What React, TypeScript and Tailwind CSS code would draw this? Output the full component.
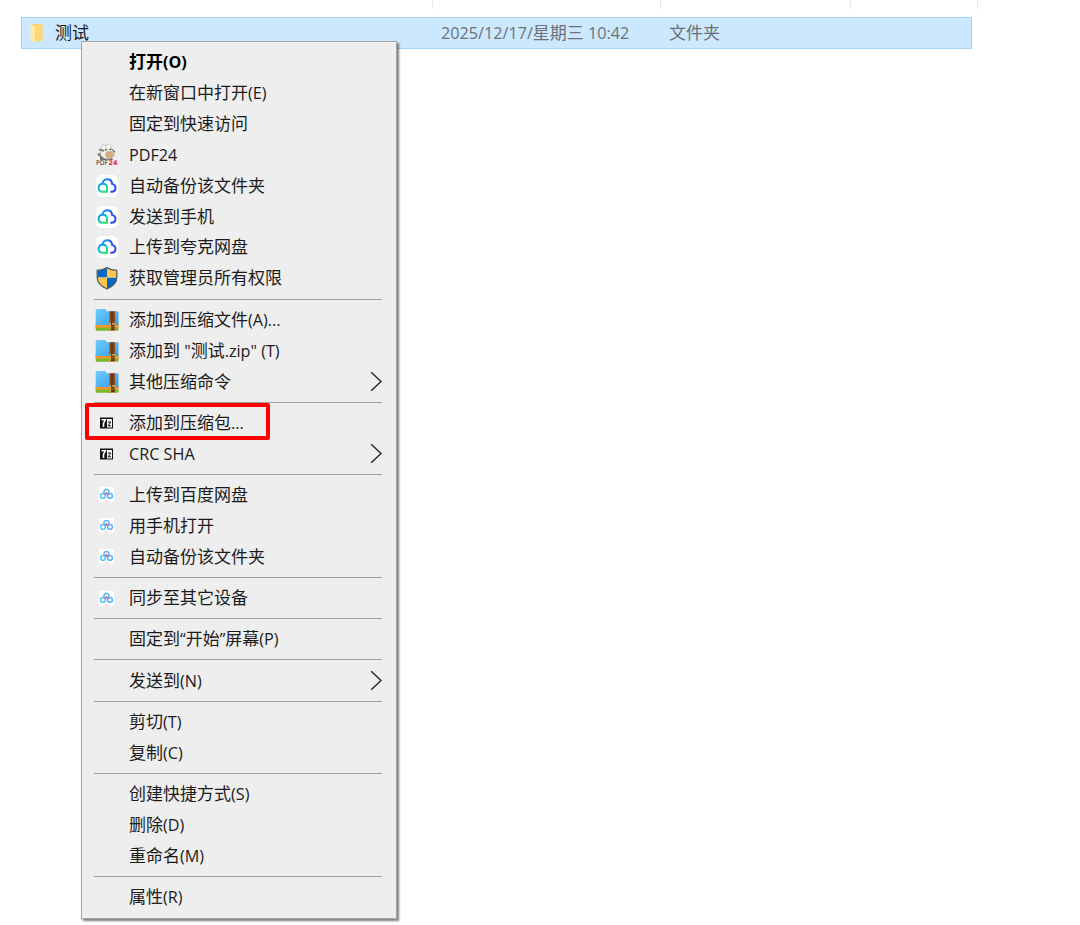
import type { ReactNode } from "react";

type Item = { label: string; icon?: ReactNode; bold?: boolean; sub?: boolean; marked?: boolean };

/* Latin runs are set slightly smaller than the Chinese characters beside them. */
function Mixed({ text }: { text: string }) {
  const runs = text.match(/[\u2e80-\uffff]+|[^\u2e80-\uffff]+/g) ?? [];
  return (
    <>
      {runs.map((run, i) =>
        /[\u2e80-\uffff]/.test(run) ? (
          <span key={i}>{run}</span>
        ) : (
          <span key={i} className="text-[16.2px] leading-none">
            {run}
          </span>
        ),
      )}
    </>
  );
}

function Folder() {
  return (
    <svg width="14" height="20" viewBox="0 0 14 20">
      <path d="M1 1h11.5v16.5H4L1 18z" fill="#f6d27a" />
      <path d="M0.5 1.5 5 2.8V19L0.5 17.5z" fill="#ffe8a4" />
      <path d="M5 3h7.5v14.5L5 19z" fill="#fbd978" />
    </svg>
  );
}

function Sheep() {
  return (
    <svg width="22" height="24" viewBox="0 0 22 24">
      <path d="M4 17v-3L1 11l3-1 1 3h10l2 4z" fill="#77736c" />
      <ellipse cx="11.5" cy="10" rx="7" ry="6" fill="#f4f2ed" stroke="#aaa69f" strokeWidth=".8" />
      <circle cx="8" cy="4.5" r="2.7" fill="#f8f7f3" stroke="#aaa" strokeWidth=".6" />
      <circle cx="12.5" cy="3.7" r="2.7" fill="#f8f7f3" stroke="#aaa" strokeWidth=".6" />
      <path d="M3 6.5 8 8M16 7l3 2" stroke="#77736c" strokeWidth="1.4" />
      <ellipse cx="13.5" cy="11.8" rx="4.3" ry="3.8" fill="#d2ad82" />
      <circle cx="10" cy="7" r=".8" fill="#222" />
      <circle cx="14.5" cy="6.5" r=".8" fill="#222" />
      <text x="0" y="22" fontSize="6.5" fontFamily="DejaVu Sans" fill="#333" textLength="12" lengthAdjust="spacingAndGlyphs">PDF</text>
      <text x="12.5" y="22" fontSize="6.5" fontWeight="bold" fontFamily="DejaVu Sans" fill="#e5242b" textLength="9" lengthAdjust="spacingAndGlyphs">24</text>
    </svg>
  );
}

function QuarkCloud() {
  return (
    <svg width="22" height="22" viewBox="0 0 22 22" fill="none">
      <defs>
        <linearGradient id="cloudBlue" x1="0" y1="0" x2="1" y2="1">
          <stop offset="0" stopColor="#17a8f5" />
          <stop offset=".4" stopColor="#2456f5" />
          <stop offset="1" stopColor="#3040f0" />
        </linearGradient>
        <linearGradient id="cloudGreen" x1="0" y1="0" x2=".7" y2="1">
          <stop offset="0" stopColor="#1779f5" />
          <stop offset=".5" stopColor="#10c4d8" />
          <stop offset="1" stopColor="#24e06c" />
        </linearGradient>
      </defs>
      <rect width="22" height="22" rx="5.5" fill="#fff" />
      <path d="M6.5 8C7.2 5.5 9 4.2 11.2 4.2c2.9 0 4.8 2 4.9 4.7 2.1.6 3.4 2 3.4 3.9 0 2.4-1.7 4-4 4h-1.2" stroke="url(#cloudBlue)" strokeWidth="2" />
      <path d="M11 16.8H6.7c-2.4 0-4.1-1.6-4.1-4s1.8-4 4.1-4c2.5 0 4.3 1.7 4.3 4.2z" stroke="url(#cloudGreen)" strokeWidth="2" />
    </svg>
  );
}

function Shield() {
  return (
    <svg width="22" height="24" viewBox="0 0 22 24">
      <defs>
        <clipPath id="shieldClip">
          <path d="M11 1.5C8 3.7 4.6 4.3 1.2 4.3v7C1.2 16.6 5.5 20.7 11 23c5.5-2.3 9.8-6.4 9.8-11.7v-7C17.4 4.3 14 3.7 11 1.5z" />
        </clipPath>
      </defs>
      <g clipPath="url(#shieldClip)">
        <path d="M0 0h11v11.5H0zM11 11.5h11V24H11z" fill="#0869c5" />
        <path d="M11 0h11v11.5H11zM0 11.5h11V24H0z" fill="#ffc64a" />
      </g>
      <path d="M11 1.5C8 3.7 4.6 4.3 1.2 4.3v7C1.2 16.6 5.5 20.7 11 23c5.5-2.3 9.8-6.4 9.8-11.7v-7C17.4 4.3 14 3.7 11 1.5z" fill="none" stroke="#555d61" strokeWidth="1.3" />
    </svg>
  );
}

function Archive() {
  return (
    <svg width="24" height="24" viewBox="0 0 24 24">
      <defs>
        <linearGradient id="folderBlue" x1="0" y1="0" x2="1" y2="1">
          <stop offset="0" stopColor="#72cbfc" />
          <stop offset="1" stopColor="#339fe9" />
        </linearGradient>
      </defs>
      <path d="M.7 16h22.8v5.5q0 1.2-1.2 1.2H2Q.7 22.700.7 21.500z" fill="#76b82a" />
      <path d="M.7 15h22.800v4.600H.7z" fill="#f7962b" />
      <path d="M.7 2.200Q.7 1 2 1h7.500q1 0 1.500 1l.8 1.300h10.500q1.200 0 1.200 1.200v12.500H.7z" fill="url(#folderBlue)" />
      <path d="M14.500 3.200h5.500V23h-5.500z" fill="#8d491e" />
      <path d="M16 5h2.500M16 7h2.500M16 9h2.500M16 11h2.500M16 13h2.500" stroke="#4f2a17" strokeWidth="1" />
      <path d="M14.200 15h6v7.800h-6z" fill="#d99a38" />
      <path d="M16.700 14.500v3h3M16 19h3v2.500h-3M16 20.200h3" fill="none" stroke="#4c2d15" strokeWidth="1.100" />
    </svg>
  );
}

function SevenZip() {
  return (
    <svg width="13" height="12" viewBox="0 0 13 12">
      <path d="M0 .5h13v11H0z" fill="#111" />
      <path d="M7 2h5v8.500H7z" fill="#f4f4f4" />
      <path d="M1.500 2.800h3.800L3.500 6.500V10" fill="none" stroke="#fff" strokeWidth="1.600" />
      <path d="M8 5h2.700L8.200 8.800H11" fill="none" stroke="#111" strokeWidth="1" />
    </svg>
  );
}

function Netdisk() {
  return (
    <svg width="15" height="15" viewBox="0 0 15 15" fill="none">
      <rect width="15" height="15" rx="2" fill="#fff" />
      <circle cx="7.500" cy="5" r="2.600" stroke="#64b5f3" strokeWidth="1.500" />
      <circle cx="4" cy="8.900" r="2.400" stroke="#56c3f7" strokeWidth="1.500" />
      <circle cx="11" cy="8.900" r="2.400" stroke="#5cb2f5" strokeWidth="1.500" />
      <path d="M5.700 7.200 7.500 5.700l1.900 1.800" stroke="#e4607f" strokeWidth="1.400" />
      <path d="M5.500 14h4" stroke="#f5b8c4" strokeWidth=".8" />
    </svg>
  );
}

function Arrow() {
  return (
    <svg width="13" height="21" viewBox="0 0 13 21" fill="none">
      <path d="M1.200 1.200 11 10.500 1.200 19.800" stroke="#222" strokeWidth="1.350" />
    </svg>
  );
}

const groups: Item[][] = [
  [
    { label: "打开(O)", bold: true },
    { label: "在新窗口中打开(E)" },
    { label: "固定到快速访问" },
    { label: "PDF24", icon: <Sheep /> },
    { label: "自动备份该文件夹", icon: <QuarkCloud /> },
    { label: "发送到手机", icon: <QuarkCloud /> },
    { label: "上传到夸克网盘", icon: <QuarkCloud /> },
    { label: "获取管理员所有权限", icon: <Shield /> },
  ],
  [
    { label: "添加到压缩文件(A)...", icon: <Archive /> },
    { label: '添加到 "测试.zip" (T)', icon: <Archive /> },
    { label: "其他压缩命令", icon: <Archive />, sub: true },
  ],
  [
    { label: "添加到压缩包...", icon: <SevenZip />, marked: true },
    { label: "CRC SHA", icon: <SevenZip />, sub: true },
  ],
  [
    { label: "上传到百度网盘", icon: <Netdisk /> },
    { label: "用手机打开", icon: <Netdisk /> },
    { label: "自动备份该文件夹", icon: <Netdisk /> },
  ],
  [{ label: "同步至其它设备", icon: <Netdisk /> }],
  [{ label: "固定到“开始”屏幕(P)" }],
  [{ label: "发送到(N)", sub: true }],
  [{ label: "剪切(T)" }, { label: "复制(C)" }],
  [{ label: "创建快捷方式(S)" }, { label: "删除(D)" }, { label: "重命名(M)" }],
  [{ label: "属性(R)" }],
];

function Row({ item }: { item: Item }) {
  return (
    <div className="relative flex h-[30.93px] items-center pr-[13px]">
      <div className="flex w-[47px] shrink-0 justify-center pl-[2px]">{item.icon}</div>
      <div className={item.bold ? "grow font-bold text-black" : "grow"}>
        <Mixed text={item.label} />
      </div>
      {item.sub && <Arrow />}
      {item.marked && (
        <div className="absolute -top-[4px] left-[3px] h-[37px] w-[185px] rounded-[2px] border-[4.5px] border-[#fe0000]" />
      )}
    </div>
  );
}

export default function App() {
  return (
    <div className="relative h-[925px] w-[1080px] overflow-hidden bg-white font-['Open_Sans','Noto_Sans_CJK_SC',sans-serif] text-[17px] leading-[24px] whitespace-pre text-[#1b1b1b]">
      <div className="flex h-[17px] pl-[432px]">
        <div className="h-[9px] w-[228px] border-l border-[#e8e8e8]" />
        <div className="h-[9px] w-[190px] border-l border-[#e8e8e8]" />
        <div className="h-[9px] w-[127px] border-l border-[#e8e8e8]" />
        <div className="h-[9px] border-l border-[#e8e8e8]" />
      </div>
      <div className="ml-[21px] flex h-[32px] w-[951px] items-center border border-[#a6d3f6] bg-[#cce8ff]">
        <div className="flex w-[33px] pl-[8px]">
          <Folder />
        </div>
        <div className="w-[386px]">测试</div>
        <div className="w-[228px] text-[#6d7174]">
          <Mixed text="2025/12/17/星期三 10:42" />
        </div>
        <div className="text-[#6d7174]">文件夹</div>
      </div>

      <div className="absolute top-[41px] left-[81px] h-[878px] w-[316px] border border-[#a5a5a5] bg-[#eeeeee] pt-[4.500px] shadow-[2px_2px_2px_rgba(0,0,0,0.5)]">
        {groups.map((group, g) => (
          <div key={g}>
            {g > 0 && (
              <div className="flex h-[10.350px] items-center pr-[14px] pl-[12px]">
                <div className="h-px w-full bg-[#a0a0a0]" />
              </div>
            )}
            {group.map((item) => (
              <Row key={item.label} item={item} />
            ))}
          </div>
        ))}
      </div>
    </div>
  );
}
